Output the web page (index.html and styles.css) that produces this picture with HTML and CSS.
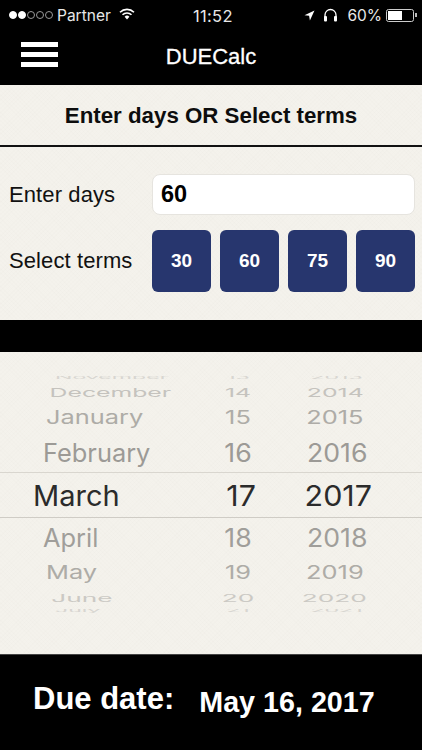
FILE: index.html
```html
<!DOCTYPE html>
<html lang="en">
<head>
<meta charset="utf-8">
<title>DUECalc</title>
<link rel="stylesheet" href="styles.css">
</head>
<body>
<div class="app">
  <header class="top">
    <div class="status">
      <div class="status-left">
        <span class="dots"><i class="dot on"></i><i class="dot on"></i><i class="dot"></i><i class="dot"></i><i class="dot"></i></span>
        <span class="carrier">Partner</span>
        <svg class="wifi" viewBox="0 0 16 12" width="16" height="12"><path d="M1 4.2a10 10 0 0 1 14 0" fill="none" stroke="#fff" stroke-width="1.6"/><path d="M3.5 6.8a6.4 6.4 0 0 1 9 0" fill="none" stroke="#fff" stroke-width="1.6"/><path d="M5.6 8.8a3.4 3.4 0 0 1 4.8 0L8 11.4z" fill="#fff"/></svg>
      </div>
      <span class="clock">11:52</span>
      <div class="status-right">
        <svg class="loc" viewBox="0 0 11 11" width="11" height="11"><path d="M10.5.5L.5 5.2l4.6.6.8 4.7z" fill="#fff"/></svg>
        <svg class="phones" viewBox="0 0 15 14" width="15" height="14"><path d="M2 10V7a5.500 5.500 0 0 1 11 0v3" fill="none" stroke="#fff" stroke-width="1.300"/><rect x="1" y="8" width="3" height="5.500" rx="1" fill="#fff"/><rect x="11" y="8" width="3" height="5.500" rx="1" fill="#fff"/></svg>
        <span class="pct">60%</span>
        <span class="battery"><span class="battery-fill"></span></span><span class="battery-tip"></span>
      </div>
    </div>
    <div class="nav">
      <div class="burger"><i></i><i></i><i></i></div>
      <h1 class="app-title">DUECalc</h1>
    </div>
  </header>

  <section class="form">
    <h2 class="form-title">Enter days OR Select terms</h2>
    <div class="form-body">
      <div class="line">
        <span class="label">Enter days</span>
        <div class="input">60</div>
      </div>
      <div class="line terms">
        <span class="label">Select terms</span>
        <div class="buttons">
          <button class="term">30</button>
          <button class="term">60</button>
          <button class="term">75</button>
          <button class="term">90</button>
        </div>
      </div>
    </div>
  </section>

  <div class="gap"></div>

  <section class="picker">
    <div class="row r-a"><span class="m">November</span><span class="d">13</span><span class="y">2013</span></div>
    <div class="row r-b"><span class="m">December</span><span class="d">14</span><span class="y">2014</span></div>
    <div class="row r-c"><span class="m">January</span><span class="d">15</span><span class="y">2015</span></div>
    <div class="row r-d"><span class="m">February</span><span class="d">16</span><span class="y">2016</span></div>
    <div class="row r-sel"><span class="m">March</span><span class="d">17</span><span class="y">2017</span></div>
    <div class="row r-e"><span class="m">April</span><span class="d">18</span><span class="y">2018</span></div>
    <div class="row r-f"><span class="m">May</span><span class="d">19</span><span class="y">2019</span></div>
    <div class="row r-g"><span class="m">June</span><span class="d">20</span><span class="y">2020</span></div>
    <div class="row r-h"><span class="m">July</span><span class="d">21</span><span class="y">2021</span></div>
  </section>

  <footer class="due">
    <span class="due-label">Due date:</span>
    <span class="due-value">May 16, 2017</span>
  </footer>
</div>
</body>
</html>
```
FILE: styles.css
```css
* { box-sizing: border-box; }
html, body { margin: 0; padding: 0; }
body { width: 422px; height: 750px; overflow: hidden; background: #000; font-family: "Liberation Sans", Arial, sans-serif; }
.app { display: flex; flex-direction: column; height: 750px; }

.top { height: 85px; background: #000; color: #fff; }
.status { height: 30px; display: flex; align-items: center; justify-content: space-between; position: relative; padding: 0 5px 0 9px; font-family: Inter, "Liberation Sans", sans-serif; font-size: 15.500px; color: #e8e8e8; }
.status-left, .status-right { display: flex; align-items: center; }
.dots { display: flex; gap: 1px; }
.dot { width: 8px; height: 8px; border-radius: 50%; border: 1px solid #999; display: block; }
.dot.on { background: #fff; border-color: #fff; }
.carrier { margin-left: 4px; }
.wifi { margin-left: 8px; margin-top: -3px; }
.clock { position: absolute; left: 193px; top: 6px; font-size: 16.500px; letter-spacing: .3px; }
.loc { margin-right: 8px; }
.phones { margin-right: 9px; }
.pct { margin-right: 4px; }
.battery { width: 28px; height: 13px; border: 1px solid #ccc; border-radius: 2.500px; padding: 1px; display: block; }
.battery-fill { display: block; height: 100%; width: 60%; background: #fff; }
.battery-tip { width: 2px; height: 4px; background: #bbb; margin-left: 1px; }

.nav { height: 55px; display: flex; align-items: center; position: relative; }
.burger { position: absolute; left: 21px; top: 12px; display: flex; flex-direction: column; gap: 5px; }
.burger i { display: block; width: 37px; height: 5px; background: #fff; }
.app-title { margin: 0; width: 100%; text-align: center; font-size: 22px; font-weight: 400; -webkit-text-stroke: .3px #fff; line-height: 53px; height: 55px; }

.form, .picker { background-color: #f4f2ec; background-image: repeating-linear-gradient(45deg, rgba(120,110,90,.012) 0 1px, transparent 1px 3px), repeating-linear-gradient(-45deg, rgba(120,110,90,.012) 0 1px, transparent 1px 3px); }
.form { height: 235px; color: #0d0d0d; }
.form-title { margin: 0; height: 62px; line-height: 61px; text-align: center; font-size: 22.300px; font-weight: 700; border-bottom: 2px solid #111; }
.form-body { padding: 27px 7px 0 9px; }
.line { display: flex; align-items: center; justify-content: space-between; }
.label { font-size: 22px; color: #111; letter-spacing: .1px; }
.input { width: 263px; height: 41px; background: #fff; border: 1px solid #e6e4df; border-radius: 8px; padding: 0 8px; line-height: 38px; font-size: 23.500px; font-weight: 700; color: #000; }
.terms { margin-top: 15px; }
.buttons { width: 263px; display: flex; justify-content: space-between; }
.term { width: 59px; height: 62px; padding: 0; border: 0; border-radius: 6px; background: #27366e; color: #fff; font: 700 19px "Liberation Sans", Arial, sans-serif; }

.gap { height: 32px; background: #000; }

.picker { height: 302px; position: relative; overflow: hidden; padding-top: 24px; font-family: Inter, "Liberation Sans", sans-serif; }
.row { display: grid; grid-template-columns: 192px 92px 138px; align-items: center; white-space: nowrap; }
.m { display: block; transform-origin: left center; }
.d, .y { display: block; text-align: center; }
.y { padding-right: 30px; }

.r-a { height: 4px; font-size: 21px; line-height: 4px; color: #d8d6d1; overflow: hidden; }
.r-a span { transform: scale(1.1, .2); }
.r-a .m { padding-left: 50px; }
.r-b { height: 22px; font-size: 21px; color: #c5c3be; }
.r-b span { transform: scale(1.18, .58); }
.r-b .m { padding-left: 42px; }
.r-c { height: 31px; font-size: 21px; color: #aeaca7; }
.r-c span { transform: scale(1.21, .88); }
.r-c .m { padding-left: 38px; }
.r-d { height: 39px; font-size: 25.400px; color: #9c9a96; }
.r-d .d, .r-d .y { transform: scaleX(1.05); }
.r-d .m { padding-left: 43px; }
.r-sel { height: 46px; font-size: 29px; color: #2b2b2b; border-top: 1px solid #d9d6cf; border-bottom: 1px solid #cfccc5; }
.r-sel .d, .r-sel .y { transform: scaleX(1.05); }
.r-sel .d { padding-left: 6px; }
.r-sel .y { padding-right: 28px; }
.r-sel .m { padding-left: 33px; }
.r-e { height: 38px; font-size: 25.400px; color: #a09e9a; }
.r-e .d, .r-e .y { transform: scaleX(1.05); }
.r-e .m { padding-left: 43px; }
.r-f { height: 32px; font-size: 21px; color: #aeaca7; }
.r-f span { transform: scale(1.21, .88); }
.r-f .m { padding-left: 38px; }
.r-g { height: 18px; font-size: 21px; color: #cbc9c4; }
.r-g span { transform: scale(1.25, .5) translateY(-5px); }
.r-g .m { padding-left: 41px; }
.r-h { height: 4px; margin-top: 3px; font-size: 21px; line-height: 4px; color: #d8d6d1; overflow: hidden; }
.r-h span { transform: scale(1.1, .2); }
.r-h .m { padding-left: 50px; }

.due { flex: 1; background: #000; color: #fff; display: flex; align-items: center; padding: 0 0 0 33px; font-weight: 700; border-top: 1px solid #444; }
.due-label { font-size: 31px; margin-top: -8px; }
.due-value { font-size: 28.700px; margin-left: 25px; }
```
